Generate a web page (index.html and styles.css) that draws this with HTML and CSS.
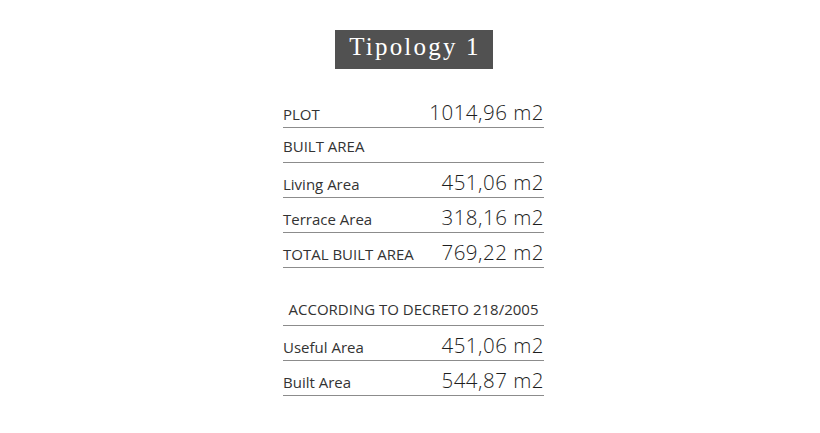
FILE: index.html
```html
<!DOCTYPE html>
<html lang="en">
<head>
  <meta charset="UTF-8">
  <meta name="viewport" content="width=device-width, initial-scale=1">
  <title>Tipology 1</title>
  <link rel="stylesheet" href="styles.css">
</head>
<body>

<div class="sheet">
  <div class="title-wrap">
    <h1 class="title">Tipology 1</h1>
  </div>

  <div class="area-table">
    <div class="row">
      <span class="label caps">PLOT</span>
      <span class="value">1014,96 m2</span>
    </div>
    <div class="row">
      <span class="label caps">BUILT AREA</span>
    </div>
    <div class="row">
      <span class="label">Living Area</span>
      <span class="value">451,06 m2</span>
    </div>
    <div class="row">
      <span class="label">Terrace Area</span>
      <span class="value">318,16 m2</span>
    </div>
    <div class="row">
      <span class="label caps">TOTAL BUILT AREA</span>
      <span class="value">769,22 m2</span>
    </div>

    <!-- decreto 218/2005 -->
    <div class="row row-center gap-top">
      <span class="label caps">ACCORDING TO DECRETO 218/2005</span>
    </div>
    <div class="row">
      <span class="label">Useful Area</span>
      <span class="value">451,06 m2</span>
    </div>
    <div class="row">
      <span class="label">Built Area</span>
      <span class="value">544,87 m2</span>
    </div>
  </div>
</div>

</body>
</html>
```

FILE: styles.css
```css
body {
  margin: 0;
  padding: 30px 0 0 7px;
  background: #ffffff;
  font-family: "Open Sans", sans-serif;
}
.sheet {
  width: 261px;
  margin: 0 auto;
}
.title-wrap {
  text-align: center;
  margin-bottom: 24px;
}
.title {
  display: inline-block;
  width: 158px;
  height: 39px;
  box-sizing: border-box;
  margin: 0;
  padding: 0 0 5px 3px;
  background: #515151;
  color: #ffffff;
  font-family: "Liberation Serif", serif;
  font-size: 25px;
  font-weight: normal;
  line-height: 34px;
  letter-spacing: 2.2px;
}
.row {
  display: flex;
  justify-content: space-between;
  align-items: baseline;
  height: 35px;
  box-sizing: border-box;
  padding-top: 8px;
  border-bottom: 1px solid #8c8c8c;
}
.row-center {
  justify-content: center;
}
.gap-top {
  margin-top: 23px;
}
.label {
  font-size: 15px;
  font-stretch: 89%;
  font-weight: 370;
  line-height: 20px;
  color: #333333;
}
.value {
  font-size: 20.5px;
  font-weight: 360;
  line-height: 22px;
  letter-spacing: 0.5px;
  color: #1e1e1e;
}
```
